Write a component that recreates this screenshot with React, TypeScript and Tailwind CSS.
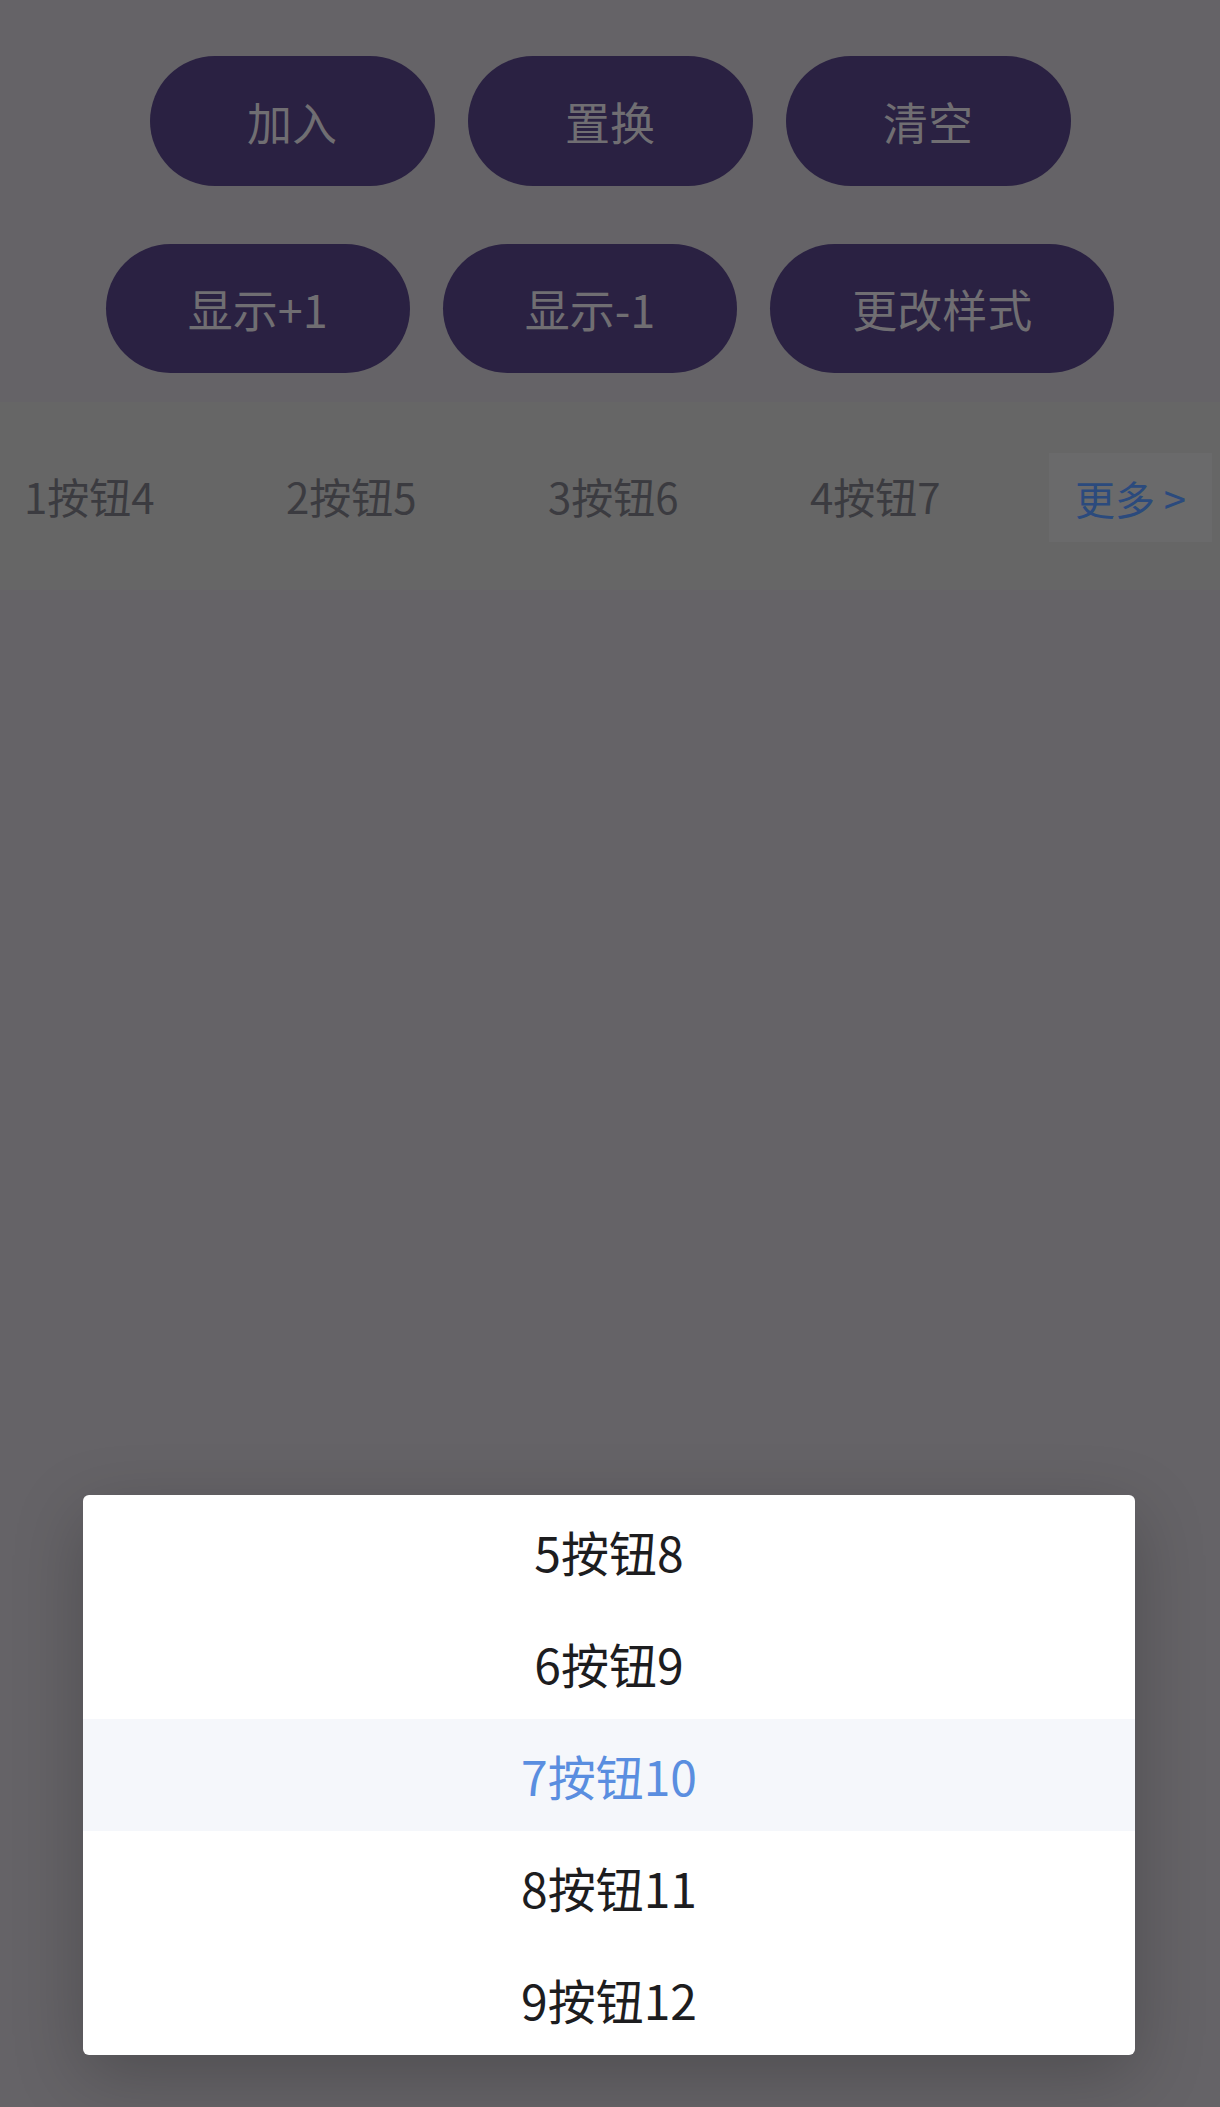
import React from 'react';

const topButtons = ['加入', '置换', '清空'];
const midButtons = ['显示+1', '显示-1', '更改样式'];
const tabs = ['1按钮4', '2按钮5', '3按钮6', '4按钮7'];
const menuItems = ['5按钮8', '6按钮9', '7按钮10', '8按钮11', '9按钮12'];
const activeIndex = 2;

const font = { fontFamily: '"Noto Sans CJK SC", "Noto Sans", sans-serif' };

const App: React.FC = () => {
  return (
    <div
      className="relative h-[2107px] w-[1220px] overflow-hidden bg-[#656367]"
      style={font}
    >
      {/* Action buttons */}
      <div className="flex flex-col items-center pt-[56px]">
        <div className="flex gap-[33px]">
          {topButtons.map((label) => (
            <button
              key={label}
              className="flex h-[130px] w-[285px] items-center justify-center rounded-full bg-[#2a2142] text-[45px] leading-none text-[#706e72]"
            >
              {label}
            </button>
          ))}
        </div>
        <div className="mt-[58px] flex gap-[33px]">
          {midButtons.map((label) => (
            <button
              key={label}
              className="flex h-[129px] items-center justify-center rounded-full bg-[#2a2142] px-[82px] text-[45px] leading-none text-[#706e72]"
            >
              {label}
            </button>
          ))}
        </div>
      </div>

      {/* Tab bar */}
      <div className="relative mt-[29px] flex h-[188px] items-center overflow-hidden bg-[#666666]">
        {tabs.map((t) => (
          <div
            key={t}
            className="w-[262px] shrink-0 pl-[24px] text-[42px] leading-none text-[#3b3b40]"
          >
            {t}
          </div>
        ))}
        <div className="absolute right-[8px] top-[51px] flex h-[89px] w-[163px] items-center justify-center bg-[#6a6a6b] text-[40px] leading-none text-[#2b4a7d]">
          更多 &gt;
        </div>
      </div>

      {/* Popup menu */}
      <div className="absolute left-[83px] top-[1495px] w-[1052px] overflow-hidden rounded-[6px] bg-white shadow-[0_20px_70px_rgba(0,0,0,0.22)]">
        {menuItems.map((item, i) => (
          <div
            key={item}
            className={
              i === activeIndex
                ? 'flex h-[112px] items-center justify-center bg-[#f5f7fb] text-[48px] leading-none text-[#5a8ee0]'
                : 'flex h-[112px] items-center justify-center text-[48px] leading-none text-[#1d1d1f]'
            }
          >
            {item}
          </div>
        ))}
      </div>
    </div>
  );
};

export default App;
